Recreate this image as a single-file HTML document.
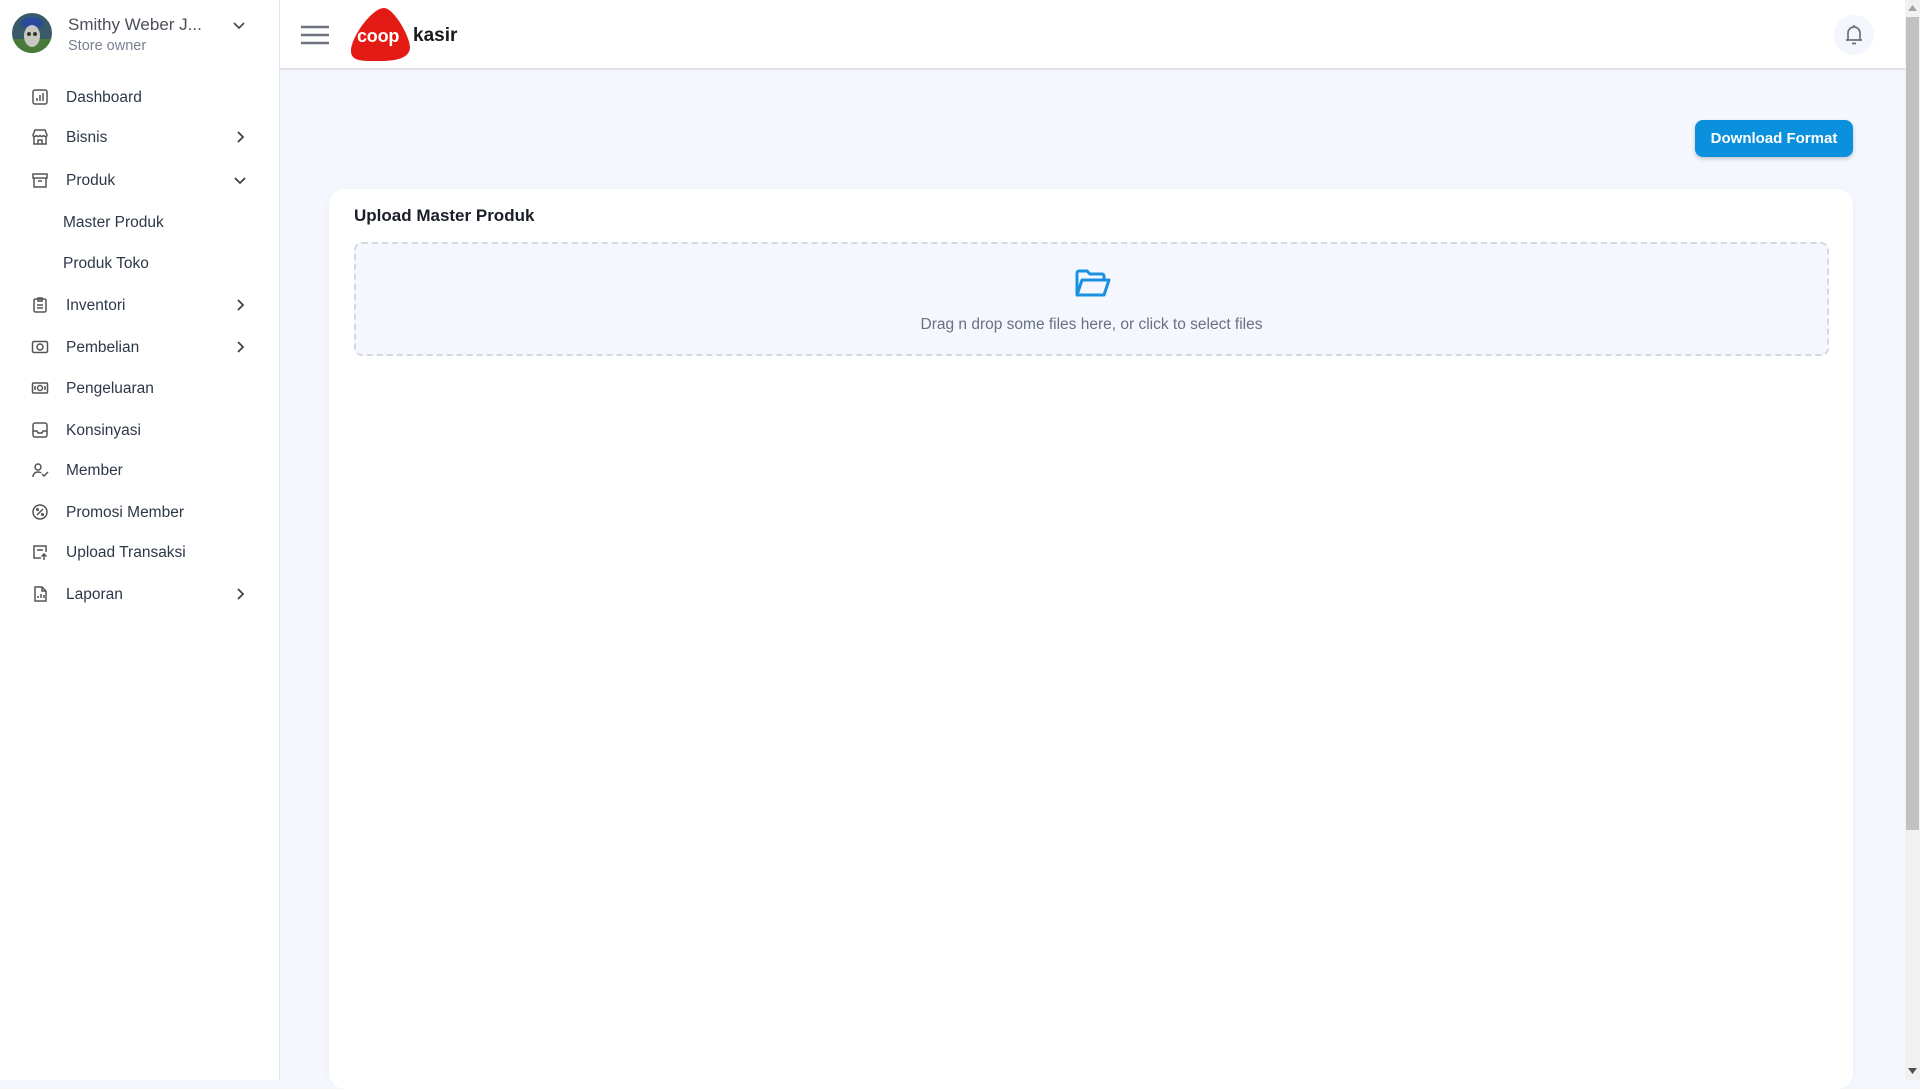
<!DOCTYPE html>
<html><head><meta charset="utf-8"><style>
*{box-sizing:border-box;margin:0;padding:0}
body{width:1920px;height:1080px;overflow:hidden;background:#f4f7fd;font-family:"Liberation Sans",sans-serif;position:relative}
.sb{position:absolute;left:0;top:0;width:280px;height:1080px;background:#fff;border-right:1px solid #e2e5ea}
.hd{position:absolute;left:280px;top:0;width:1625px;height:70px;background:#fff;border-bottom:2px solid #e0e2e6}
.it{position:absolute;left:0;width:279px;height:30px;display:flex;align-items:center;font-size:15.5px;color:#2d3748}
.it svg.i{position:absolute;left:31px;top:6px;width:18px;height:18px}
.it span{position:absolute;left:66px;top:7px}
.it svg.c{position:absolute;left:233px;top:8px;width:14px;height:14px}
.sub span{left:63px}
</style></head><body>
<div class="sb">
  <svg style="position:absolute;left:12px;top:13px" width="40" height="40" viewBox="0 0 40 40"><defs><clipPath id="a"><circle cx="20" cy="20" r="20"/></clipPath></defs><g clip-path="url(#a)"><rect width="40" height="40" fill="#3a5a6a"/><rect y="26" width="40" height="14" fill="#4a7a3a"/><ellipse cx="20" cy="10" rx="11" ry="6" fill="#2a4aa0"/><ellipse cx="20" cy="23" rx="8" ry="11" fill="#c8c8c0"/><circle cx="17" cy="21" r="2" fill="#333"/><circle cx="23" cy="21" r="2" fill="#333"/></g></svg>
  <div style="position:absolute;left:68px;top:15px;font-size:17px;color:#4a4f58">Smithy Weber J...</div>
  <div style="position:absolute;left:68px;top:38px;font-size:14.5px;color:#7a8090">Store owner</div>
  <svg style="position:absolute;left:232px;top:18px" width="14" height="14" viewBox="0 0 14 14"><path d="M2 5l5 5 5-5" fill="none" stroke="#4a4f58" stroke-width="1.8"/></svg>

  <div class="it" style="top:82px"><svg class="i" viewBox="0 0 18 18" fill="none" stroke="#555" stroke-width="1.5"><rect x="2" y="2" width="14" height="14" rx="2"/><path d="M6 13v-3M9 13V7M12 13V5"/></svg><span>Dashboard</span></div>
  <div class="it" style="top:122px"><svg class="i" viewBox="0 0 18 18" fill="none" stroke="#555" stroke-width="1.5"><path d="M2 7l2-5h10l2 5c0 2-3 2-3.5 0-.5 2-3 2-3.5 0-.5 2-3 2-3.5 0C5 9 2 9 2 7zM3 9v7h12V9M7 16v-4h4v4"/></svg><span>Bisnis</span><svg class="c" viewBox="0 0 14 14"><path d="M5 2l5 5-5 5" fill="none" stroke="#444" stroke-width="1.8"/></svg></div>
  <div class="it" style="top:165px"><svg class="i" viewBox="0 0 18 18" fill="none" stroke="#555" stroke-width="1.5"><rect x="2" y="3" width="14" height="4"/><path d="M3 7v9h12V7M7 10h4"/></svg><span>Produk</span><svg class="c" viewBox="0 0 14 14"><path d="M2 5l5 5 5-5" fill="none" stroke="#444" stroke-width="1.8"/></svg></div>
  <div class="it sub" style="top:207px"><span>Master Produk</span></div>
  <div class="it sub" style="top:248px"><span>Produk Toko</span></div>
  <div class="it" style="top:290px"><svg class="i" viewBox="0 0 18 18" fill="none" stroke="#555" stroke-width="1.5"><rect x="3" y="3" width="12" height="13" rx="1.5"/><path d="M7 2h4v3H7zM6 9h6M6 12h6"/></svg><span>Inventori</span><svg class="c" viewBox="0 0 14 14"><path d="M5 2l5 5-5 5" fill="none" stroke="#444" stroke-width="1.8"/></svg></div>
  <div class="it" style="top:332px"><svg class="i" viewBox="0 0 18 18" fill="none" stroke="#555" stroke-width="1.5"><rect x="1.5" y="3.5" width="15" height="11" rx="1.5"/><circle cx="9" cy="9" r="3"/></svg><span>Pembelian</span><svg class="c" viewBox="0 0 14 14"><path d="M5 2l5 5-5 5" fill="none" stroke="#444" stroke-width="1.8"/></svg></div>
  <div class="it" style="top:373px"><svg class="i" viewBox="0 0 18 18" fill="none" stroke="#555" stroke-width="1.5"><rect x="1.5" y="4" width="15" height="10" rx="1"/><circle cx="9" cy="9" r="2.5"/><path d="M4 7v4M14 7v4"/></svg><span>Pengeluaran</span></div>
  <div class="it" style="top:415px"><svg class="i" viewBox="0 0 18 18" fill="none" stroke="#555" stroke-width="1.5"><rect x="2" y="2" width="14" height="14" rx="2"/><path d="M2 10h4l1 2h4l1-2h4"/></svg><span>Konsinyasi</span></div>
  <div class="it" style="top:455px"><svg class="i" viewBox="0 0 18 18" fill="none" stroke="#555" stroke-width="1.5"><circle cx="7" cy="6" r="3"/><path d="M2 16c0-3 2-5 5-5 1.5 0 2.5.4 3 1M11 13l2 2 4-4"/></svg><span>Member</span></div>
  <div class="it" style="top:497px"><svg class="i" viewBox="0 0 18 18" fill="none" stroke="#555" stroke-width="1.5"><circle cx="9" cy="9" r="7"/><path d="M6 12l6-6"/><circle cx="6.5" cy="6.5" r=".8"/><circle cx="11.5" cy="11.5" r=".8"/></svg><span>Promosi Member</span></div>
  <div class="it" style="top:537px"><svg class="i" viewBox="0 0 18 18" fill="none" stroke="#555" stroke-width="1.5"><path d="M10 15H3V3h12v6M13 17v-6M10.5 13.5L13 11l2.5 2.5M6 7h6"/></svg><span>Upload Transaksi</span></div>
  <div class="it" style="top:579px"><svg class="i" viewBox="0 0 18 18" fill="none" stroke="#555" stroke-width="1.5"><path d="M4 2h7l4 4v10H4zM11 2v4h4M7 13v-2M10 13V9M13 13v-3"/></svg><span>Laporan</span><svg class="c" viewBox="0 0 14 14"><path d="M5 2l5 5-5 5" fill="none" stroke="#444" stroke-width="1.8"/></svg></div>
</div>
<div class="hd">
  <svg style="position:absolute;left:21px;top:25px" width="28" height="20" viewBox="0 0 28 20"><path d="M0 2h28M0 10h28M0 18h28" stroke="#6b7280" stroke-width="2.6"/></svg>
  <svg style="position:absolute;left:70px;top:7px" width="62" height="56" viewBox="0 0 62 56"><path d="M34 1C44 1 60 30 60 40 60 52 44 54 30 54 14 54 1 55 1 44 1 30 22 1 34 1z" fill="#e31b14"/></svg>
  <div style="position:absolute;left:77px;top:26px;font-size:18px;font-weight:bold;color:#fff;letter-spacing:-.2px">coop</div>
  <div style="position:absolute;left:133px;top:25px;font-size:19px;font-weight:bold;color:#1a1a1a">kasir</div>
  <div style="position:absolute;left:1554px;top:15px;width:40px;height:40px;border-radius:50%;background:#f3f6fc"></div>
  <svg style="position:absolute;left:1564px;top:24px" width="20" height="22" viewBox="0 0 20 22" fill="none" stroke="#6b7280" stroke-width="1.7"><path d="M4 16V9a6 6 0 0112 0v7M2 16h16M8 19.5h4M10 1v2"/></svg>
</div>
<div style="position:absolute;left:1695px;top:120px;width:158px;height:37px;background:#0a90dc;border-radius:8px;color:#fff;font-weight:bold;font-size:15px;display:flex;align-items:center;justify-content:center;box-shadow:0 2px 4px rgba(0,0,0,.2)">Download Format</div>
<div style="position:absolute;left:329px;top:189px;width:1524px;height:900px;background:#fff;border-radius:16px;box-shadow:0 0 10px rgba(0,0,0,.03)">
  <div style="position:absolute;left:25px;top:17px;font-size:17px;font-weight:bold;color:#1a1e2a">Upload Master Produk</div>
  <div style="position:absolute;left:25px;top:53px;width:1475px;height:114px;border:2px dashed #d5d8df;border-radius:8px;background:#f4f7fd">
    <svg style="position:absolute;left:719px;top:25px" width="36" height="29" viewBox="0 0 36 29" fill="none" stroke="#1a90e0" stroke-width="3" stroke-linejoin="round"><path d="M2 25V4a2 2 0 012-2h8l3 3h12a2 2 0 012 2v3"/><path d="M2 26l5-15h27l-5 15z"/></svg>
    <div style="position:absolute;left:0;right:0;top:72px;text-align:center;font-size:15.5px;color:#6b7080">Drag n drop some files here, or click to select files</div>
  </div>
</div>
<div style="position:absolute;left:1905px;top:0;width:15px;height:1080px;background:#f1f1f1">
  <div style="position:absolute;left:1px;top:17px;width:13px;height:813px;background:#c1c1c1"></div>
  <svg style="position:absolute;left:3px;top:5px" width="9" height="6"><path d="M0 6L4.5 0 9 6z" fill="#a3a3a3"/></svg>
  <svg style="position:absolute;left:3px;top:1068px" width="9" height="6"><path d="M0 0L4.5 6 9 0z" fill="#505050"/></svg>
</div>
</body></html>
